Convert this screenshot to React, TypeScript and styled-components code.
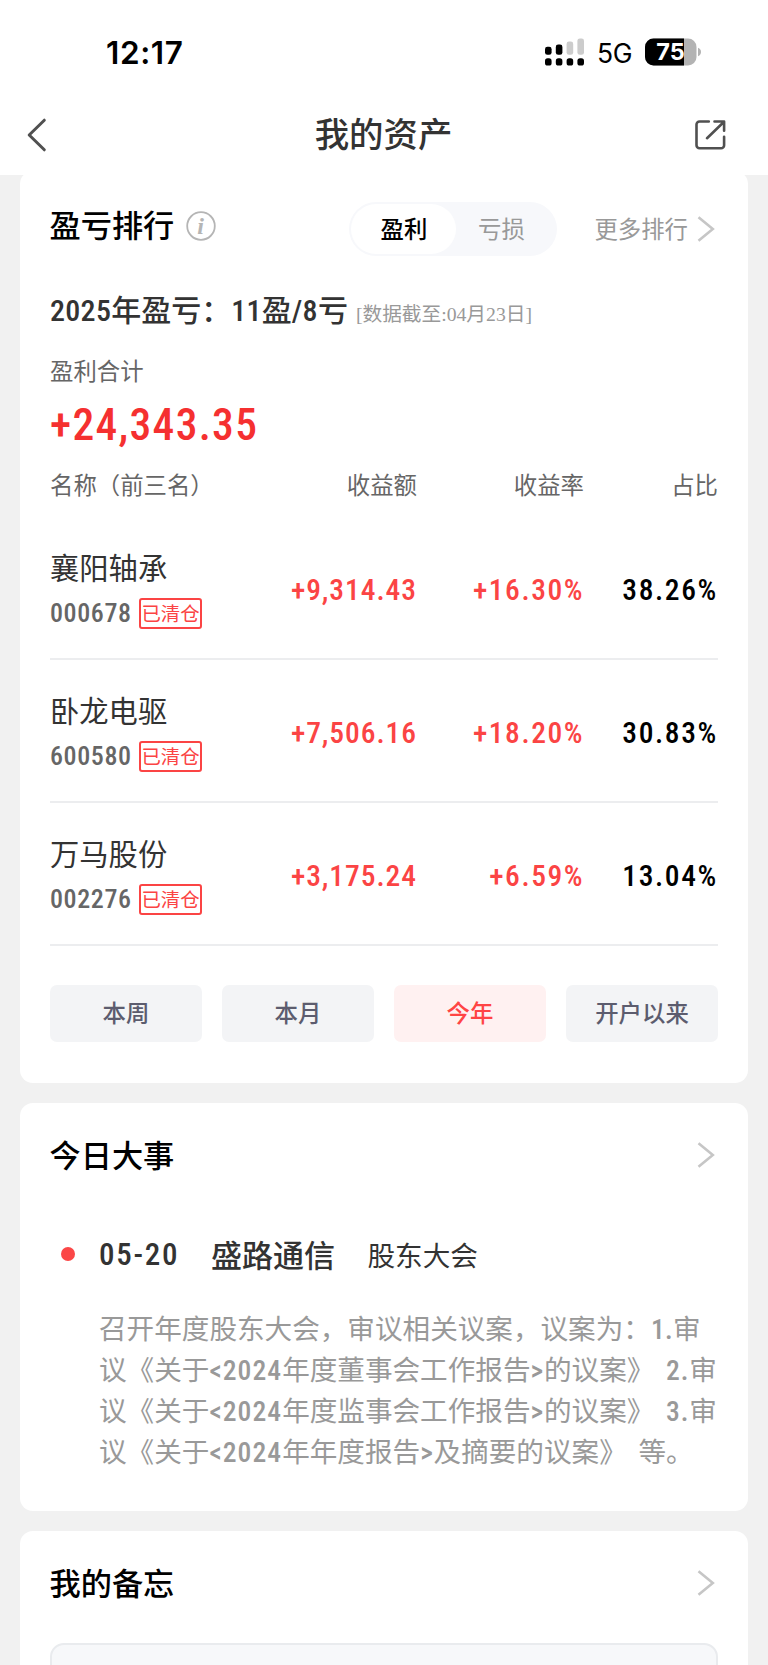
import React from "react";
import styled, { createGlobalStyle } from "styled-components";

const GlobalStyle = createGlobalStyle`
  * { box-sizing: border-box; }
  body {
    margin: 0;
    background: #f1f1f1;
    color: #333;
    font-family: "Noto Sans CJK SC", sans-serif;
  }
`;

const Screen = styled.div`
  width: 768px;
  height: 1665px;
  overflow: hidden;
  background: #f1f1f1;
  display: flex;
  flex-direction: column;
  white-space: nowrap;
`;

const Header = styled.header`
  position: relative;
  z-index: 1;
  flex: none;
  height: 175px;
  background: #fff;
`;

const StatusBar = styled.div`
  display: flex;
  align-items: center;
  justify-content: space-between;
  height: 104px;
  padding: 0 66px 0 106px;
  font-family: Inter, sans-serif;
  color: #000;
`;

const Clock = styled.span`
  font-size: 31.5px;
  font-weight: 600;
  letter-spacing: 0.6px;
`;

const StatusIcons = styled.div`
  display: flex;
  align-items: center;
`;

const Network = styled.span`
  margin: 2px 13px 0 12px;
  font-size: 26.5px;
  letter-spacing: -0.5px;
`;

const NavBar = styled.nav`
  display: flex;
  align-items: center;
  justify-content: space-between;
  height: 61px;
  padding: 0 42px 0 26px;
`;

const NavTitle = styled.h1`
  margin: -6px 0 0 25px;
  font-size: 34.4px;
  line-height: 50px;
  font-weight: 500;
  color: #333;
`;

const Card = styled.section<{ $height?: number }>`
  flex: none;
  margin: 0 20px 20px;
  padding: 0 30px;
  height: ${(p) => (p.$height ? `${p.$height}px` : "auto")};
  border-radius: 13px;
  background: #fff;
`;

const RankingCard = styled(Card)`
  margin-top: -4px;
`;

const CardHead = styled.div<{ $height: number }>`
  display: flex;
  align-items: center;
  height: ${(p) => p.$height}px;
`;

const Heading = styled.h2`
  margin: -2px 0 0 -0.5px;
  font-size: 31.2px;
  line-height: 44px;
  font-weight: 500;
  color: #000;
`;

const InfoIcon = styled.svg`
  margin: 3px 0 0 10.5px;
`;

const Segmented = styled.div`
  display: flex;
  width: 208px;
  height: 54px;
  margin: 8px 0 0 auto;
  padding: 2px;
  border-radius: 27px;
  background: #f7f8fb;
`;

const Segment = styled.span<{ $active?: boolean }>`
  width: ${(p) => (p.$active ? 105 : 99)}px;
  border-radius: 25px;
  font-size: 23.4px;
  line-height: 49px;
  text-align: center;
  padding-right: ${(p) => (p.$active ? 0 : 9)}px;
  font-weight: ${(p) => (p.$active ? 500 : 400)};
  color: ${(p) => (p.$active ? "#000" : "#999")};
  background: ${(p) => (p.$active ? "#fff" : "transparent")};
`;

const MoreLink = styled.a`
  display: flex;
  align-items: center;
  gap: 9px;
  margin: 8px 3px 0 37px;
  font-size: 23.4px;
  line-height: 49px;
  color: #999;
`;

const HeadArrow = styled.span`
  display: flex;
  margin: 0 3px 0 auto;
`;

const Num = styled.span<{ $spacing?: number }>`
  font-family: Roboto, sans-serif;
  font-weight: 500;
  font-stretch: 87.5%;
  letter-spacing: ${(p) => p.$spacing ?? 0.01}em;
`;

const YearLine = styled.div`
  display: flex;
  align-items: baseline;
  height: 44px;
  margin-top: 8px;
  font-size: 30px;
  line-height: 44px;
  font-weight: 500;
`;

const DataDate = styled.span`
  margin-left: 8px;
  font-family: "Liberation Serif", "Noto Sans CJK SC", serif;
  font-size: 19.7px;
  font-weight: 400;
  color: #999;
`;

const TotalLabel = styled.div`
  margin-top: 23px;
  font-size: 23.4px;
  line-height: 34px;
  color: #666;
`;

const Total = styled.div`
  height: 60px;
  margin-top: 5px;
  font-size: 43.5px;
  line-height: 60px;
  color: #f53030;
`;

const TableRow = styled.div`
  display: grid;
  grid-template-columns: 200px 167px 167px 134px;
  align-items: center;
  text-align: right;
`;

const TableHead = styled(TableRow)`
  height: 34px;
  margin: 15px 0 16.5px;
  font-size: 23.4px;
  line-height: 34px;
  color: #666;
`;

const NameHeader = styled.span`
  text-align: left;
`;

const StockRow = styled(TableRow)`
  height: 142.7px;
  padding-top: 5px;
  border-bottom: 2px solid #ecedef;
`;

const Stock = styled.div`
  margin-bottom: 6px;
`;

const StockName = styled.div`
  font-size: 29.3px;
  line-height: 42px;
  text-align: left;
`;

const StockMeta = styled.div`
  display: flex;
  align-items: center;
  margin-top: 11px;
  font-size: 26px;
  line-height: 31px;
  color: #666;
`;

const StockCode = styled(Num)`
  width: 89px;
  text-align: left;
`;

const ClearedTag = styled.span`
  width: 63px;
  height: 31px;
  border: 2px solid #fb4444;
  border-radius: 3px;
  font-size: 19.4px;
  line-height: 26px;
  text-align: center;
  color: #fb4444;
`;

const Value = styled(Num)<{ $gain?: boolean }>`
  font-size: 29.5px;
  color: ${(p) => (p.$gain ? "#fb4444" : "#000")};
`;

const Periods = styled.div`
  display: grid;
  grid-template-columns: repeat(4, 1fr);
  gap: 20px;
  margin-top: 39px;
`;

const Period = styled.button<{ $active?: boolean }>`
  height: 57px;
  padding: 0 0 2px;
  border: 0;
  border-radius: 7px;
  font-family: inherit;
  font-size: 23.4px;
  font-weight: 500;
  color: ${(p) => (p.$active ? "#ff4444" : "#5c5c6e")};
  background: ${(p) => (p.$active ? "#fff1f1" : "#f3f4f6")};
`;

const EventRow = styled.div`
  display: flex;
  align-items: center;
  height: 50px;
  margin-top: 22px;
  padding-left: 11px;
  font-size: 31px;
`;

const Dot = styled.i`
  width: 14px;
  height: 14px;
  border-radius: 50%;
  background: #fb4747;
`;

const EventDate = styled(Num)`
  margin: 1px 0 0 24px;
  width: 112px;
`;

const EventStock = styled.span`
  margin-top: -2px;
  font-weight: 500;
`;

const EventType = styled.span`
  margin-left: 32.5px;
  font-size: 27.6px;
`;

const EventText = styled.p`
  margin: 28px 0 0 49px;
  font-size: 27.6px;
  line-height: 41px;
  word-spacing: 5.5px;
  color: #999;
`;

const TextLine = styled.span`
  display: block;
  height: 41px;
`;

const Memo = styled.div`
  height: 80px;
  margin-top: 8px;
  border: 2px solid #e9ebee;
  border-radius: 14px;
  background: #f7f8fa;
`;

const Arrow = () => (
  <svg width="18" height="26" viewBox="0 0 18 26" fill="none">
    <path d="M1.5 1.2 15.8 13 1.5 24.8" stroke="#c6c6c6" strokeWidth="2.6" />
  </svg>
);

const Signal = () => (
  <svg width="40" height="28" viewBox="0 0 40 28">
    {[0, 10.8, 21.6, 32.4].map((x) => (
      <rect key={x} x={x} y="20.3" width="6.6" height="7.2" rx="2.6" />
    ))}
    <rect x="0" y="8.8" width="6.6" height="8" rx="2.4" />
    <rect x="10.8" y="6.5" width="6.6" height="10.3" rx="2.4" />
    <rect x="21.6" y="3.5" width="6.6" height="13.3" rx="2.4" fill="#ccc" />
    <rect x="32.4" y="0.4" width="6.6" height="16.4" rx="2.4" fill="#ccc" />
  </svg>
);

const Battery = () => (
  <svg width="57" height="28" viewBox="0 0 57 28">
    <defs>
      <clipPath id="level">
        <rect width="39" height="28" />
      </clipPath>
    </defs>
    <rect y="0.5" width="51.5" height="27" rx="8.5" fill="#b3b3b3" />
    <rect y="0.5" width="51.5" height="27" rx="8.5" clipPath="url(#level)" />
    <path d="M53 9.8c4 1.2 4 7.2 0 8.4Z" fill="#b3b3b3" />
    <text x="25.5" y="22" textAnchor="middle" fontFamily="Inter" fontWeight="700" fontSize="23.5" fill="#fff">
      75
    </text>
  </svg>
);

const stocks = [
  { name: "襄阳轴承", code: "000678", profit: "+9,314.43", rate: "+16.30%", share: "38.26%" },
  { name: "卧龙电驱", code: "600580", profit: "+7,506.16", rate: "+18.20%", share: "30.83%" },
  { name: "万马股份", code: "002276", profit: "+3,175.24", rate: "+6.59%", share: "13.04%" },
];

const periods = ["本周", "本月", "今年", "开户以来"];

export default function App() {
  return (
    <Screen>
      <GlobalStyle />
      <Header>
        <StatusBar>
          <Clock>12:17</Clock>
          <StatusIcons>
            <Signal />
            <Network>5G</Network>
            <Battery />
          </StatusIcons>
        </StatusBar>
        <NavBar>
          <svg width="22" height="34" viewBox="0 0 22 34" fill="none">
            <path d="M18.3 2.2 3.2 17l15.1 14.8" stroke="#505050" strokeWidth="3" strokeLinecap="round" strokeLinejoin="round" />
          </svg>
          <NavTitle>我的资产</NavTitle>
          <svg width="32" height="32" viewBox="0 0 32 32" fill="none" stroke="#505050" strokeWidth="2.6" strokeLinecap="round" strokeLinejoin="round">
            <path d="M14.8 2.5H5.5a3 3 0 0 0-3 3v20.7a3 3 0 0 0 3 3h21.6a3 3 0 0 0 3-3V17.8" />
            <path d="M20.5 2.5h9.6v9.3M29.5 3.2 13 19.2" />
          </svg>
        </NavBar>
      </Header>

      <RankingCard $height={912}>
        <CardHead $height={107}>
          <Heading>盈亏排行</Heading>
          <InfoIcon width="32" height="32" viewBox="0 0 32 32">
            <circle cx="16" cy="16" r="13.8" fill="none" stroke="#b5b5b5" strokeWidth="1.8" />
            <text x="15.6" y="23.5" textAnchor="middle" fontFamily="Liberation Serif" fontStyle="italic" fontWeight="700" fontSize="24" fill="#b5b5b5">
              i
            </text>
          </InfoIcon>
          <Segmented>
            <Segment $active>盈利</Segment>
            <Segment>亏损</Segment>
          </Segmented>
          <MoreLink>
            更多排行
            <Arrow />
          </MoreLink>
        </CardHead>
        <YearLine>
          <Num>2025</Num>年盈亏：<Num>11</Num>盈<Num>/8</Num>亏
          <DataDate>[数据截至:04月23日]</DataDate>
        </YearLine>
        <TotalLabel>盈利合计</TotalLabel>
        <Total>
          <Num $spacing={0.03}>+24,343.35</Num>
        </Total>
        <TableHead>
          <NameHeader>名称（前三名）</NameHeader>
          <span>收益额</span>
          <span>收益率</span>
          <span>占比</span>
        </TableHead>
        {stocks.map((s) => (
          <StockRow key={s.code}>
            <Stock>
              <StockName>{s.name}</StockName>
              <StockMeta>
                <StockCode $spacing={0.024}>{s.code}</StockCode>
                <ClearedTag>已清仓</ClearedTag>
              </StockMeta>
            </Stock>
            <Value $gain $spacing={0.032}>{s.profit}</Value>
            <Value $gain $spacing={0.052}>{s.rate}</Value>
            <Value $spacing={0.055}>{s.share}</Value>
          </StockRow>
        ))}
        <Periods>
          {periods.map((p) => (
            <Period key={p} $active={p === "今年"}>
              {p}
            </Period>
          ))}
        </Periods>
      </RankingCard>

      <Card $height={408}>
        <CardHead $height={104}>
          <Heading>今日大事</Heading>
          <HeadArrow>
            <Arrow />
          </HeadArrow>
        </CardHead>
        <EventRow>
          <Dot />
          <EventDate $spacing={0.055}>05-20</EventDate>
          <EventStock>盛路通信</EventStock>
          <EventType>股东大会</EventType>
        </EventRow>
        <EventText>
          <TextLine>
            召开年度股东大会，审议相关议案，议案为：<Num>1.</Num>审
          </TextLine>
          <TextLine>
            议《关于<Num $spacing={0.038}>&lt;2024</Num>年度董事会工作报告<Num $spacing={0.03}>&gt;</Num>的议案》 <Num $spacing={0.03}>2.</Num>审
          </TextLine>
          <TextLine>
            议《关于<Num $spacing={0.038}>&lt;2024</Num>年度监事会工作报告<Num $spacing={0.03}>&gt;</Num>的议案》 <Num $spacing={0.03}>3.</Num>审
          </TextLine>
          <TextLine>
            议《关于<Num $spacing={0.038}>&lt;2024</Num>年年度报告<Num $spacing={0.03}>&gt;</Num>及摘要的议案》 等。
          </TextLine>
        </EventText>
      </Card>

      <Card>
        <CardHead $height={104}>
          <Heading>我的备忘</Heading>
          <HeadArrow>
            <Arrow />
          </HeadArrow>
        </CardHead>
        <Memo />
      </Card>
    </Screen>
  );
}
